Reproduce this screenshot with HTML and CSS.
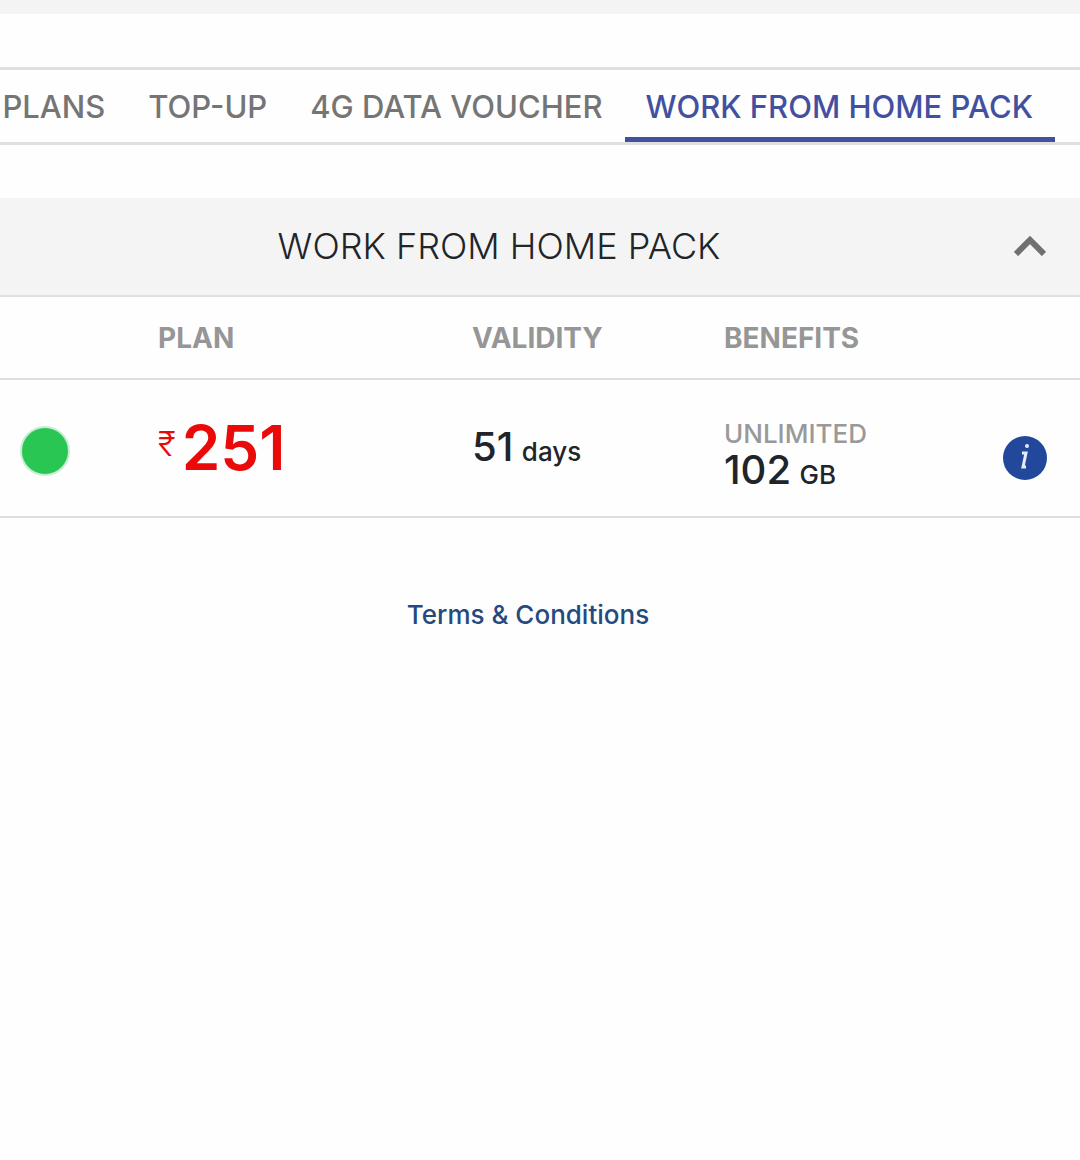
FILE: index.html
```html
<!DOCTYPE html>
<html lang="en">
<head>
    <meta charset="UTF-8">
    <meta name="viewport" content="width=device-width, initial-scale=1.0">
    <title>Work From Home Pack</title>
    <link rel="stylesheet" href="styles.css">
</head>
<body>
    <div class="top-strip"></div>
    <nav class="tabs">
        <a href="#plans">PLANS</a>
        <a href="#topup">TOP-UP</a>
        <a href="#voucher">4G DATA VOUCHER</a>
        <a href="#wfh" class="active">WORK FROM HOME PACK</a>
    </nav>
    <main>
        <button type="button" class="pack-header" aria-expanded="true">
            <span class="pack-title">WORK FROM HOME PACK</span>
            <svg class="chevron" viewBox="0 0 32 20" aria-hidden="true">
                <path d="M2 18 L16 4 L30 18" fill="none" stroke="#707070" stroke-width="6"/>
            </svg>
        </button>
        <table class="plans">
            <thead>
                <tr>
                    <td class="col-select"></td>
                    <th class="col-plan">PLAN</th>
                    <th class="col-validity">VALIDITY</th>
                    <th class="col-benefits">BENEFITS</th>
                    <td></td>
                </tr>
            </thead>
            <tbody>
                <tr>
                    <td class="col-select"><input type="radio" name="plan" aria-label="Select plan 251" checked></td>
                    <td>
                        <div class="price">
                            <span class="rupee">₹</span>
                            <span class="amount">251</span>
                        </div>
                    </td>
                    <td class="validity"><span class="value">51</span> <span class="unit">days</span></td>
                    <td class="benefits">
                        <div class="note">UNLIMITED</div>
                        <div class="data"><span class="value">102</span> <span class="unit">GB</span></div>
                    </td>
                    <td class="col-info">
                        <button type="button" class="info" aria-label="Plan details">
                            <svg viewBox="0 0 44 44" aria-hidden="true">
                                <circle cx="22" cy="22" r="22" fill="#22489b"/>
                                <circle cx="24" cy="10" r="2" fill="#e6ebf7"/>
                                <path d="M19 17 H23 L20 31 H23" fill="none" stroke="#e6ebf7" stroke-width="3"/>
                            </svg>
                        </button>
                    </td>
                </tr>
            </tbody>
        </table>
    </main>
    <footer>
        <a href="#terms">Terms &amp; Conditions</a>
    </footer>
</body>
</html>
```
FILE: styles.css
```css
*{
    padding: 0;
    margin: 0;
    box-sizing: border-box;
}
body{
    font-family: Inter, "Liberation Sans", sans-serif;
    color: #212529;
    background: #fefefe;
}
a{
    text-decoration: none;
}
button{
    font-family: inherit;
    color: inherit;
    border: none;
    cursor: pointer;
}
.top-strip{
    height: 14px;
    background: #f4f4f4;
}
.tabs{
    display: flex;
    justify-content: flex-end;
    margin-top: 53px;
    padding-right: 25px;
    border-top: 3px solid #dee0e2;
    border-bottom: 3px solid #dee0e2;
    overflow: hidden;
}
.tabs a{
    flex-shrink: 0;
    padding: 6px 22px 0 21px;
    font-size: 31px;
    font-weight: 500;
    line-height: 61px;
    color: #757575;
    border-bottom: 5px solid transparent;
}
.tabs .active{
    color: #4350a0;
    border-bottom-color: #4350a0;
}
.pack-header{
    display: flex;
    align-items: center;
    width: 100%;
    height: 99px;
    margin-top: 53px;
    padding: 0 34px 2px 0;
    background: #f4f4f4;
    border-bottom: 2px solid #dee0e2;
}
.pack-title{
    flex: 1;
    font-size: 36px;
    font-weight: 300;
    text-align: center;
}
.chevron{
    width: 32px;
    height: 20px;
    margin-left: 16px;
}
.plans{
    width: 100%;
    border-collapse: collapse;
    table-layout: fixed;
}
.plans tr{
    height: 82px;
    border-bottom: 2px solid #dedede;
}
.plans tbody tr{
    height: 138px;
}
.plans th{
    font-size: 28px;
    font-weight: 700;
    text-align: left;
    color: #969696;
}
.col-select{
    width: 158px;
    padding-left: 20px;
}
.col-plan{
    width: 314px;
}
.col-validity{
    width: 252px;
}
.col-benefits{
    width: 260px;
}
.plans input{
    display: block;
    width: 50px;
    height: 50px;
    margin-top: 6px;
    appearance: none;
    border: 2px solid #c8edd3;
    border-radius: 50%;
    background: #2ac653;
}
.price{
    display: flex;
    color: #eb0a0a;
}
.rupee{
    margin-right: 6px;
    font-size: 34px;
    font-weight: 300;
    line-height: 68px;
}
.amount{
    font-size: 62px;
    font-weight: 600;
    line-height: 76px;
}
.value{
    margin-right: 4px;
    font-size: 40px;
    font-weight: 500;
}
.unit{
    font-size: 26px;
    font-weight: 500;
}
.validity{
    padding-bottom: 4px;
}
.benefits{
    padding-top: 20px;
}
.note{
    font-size: 26px;
    line-height: 32px;
    font-weight: 500;
    color: #999;
}
.data{
    line-height: 40px;
}
.col-info{
    padding-right: 33px;
}
.info{
    display: block;
    width: 44px;
    height: 44px;
    margin: 20px 0 0 auto;
    background: none;
}
.info svg{
    display: block;
}
footer{
    margin-top: 81px;
    padding-right: 24px;
    text-align: center;
}
footer a{
    font-size: 26px;
    font-weight: 500;
    line-height: 32px;
    color: #254a80;
}
```
